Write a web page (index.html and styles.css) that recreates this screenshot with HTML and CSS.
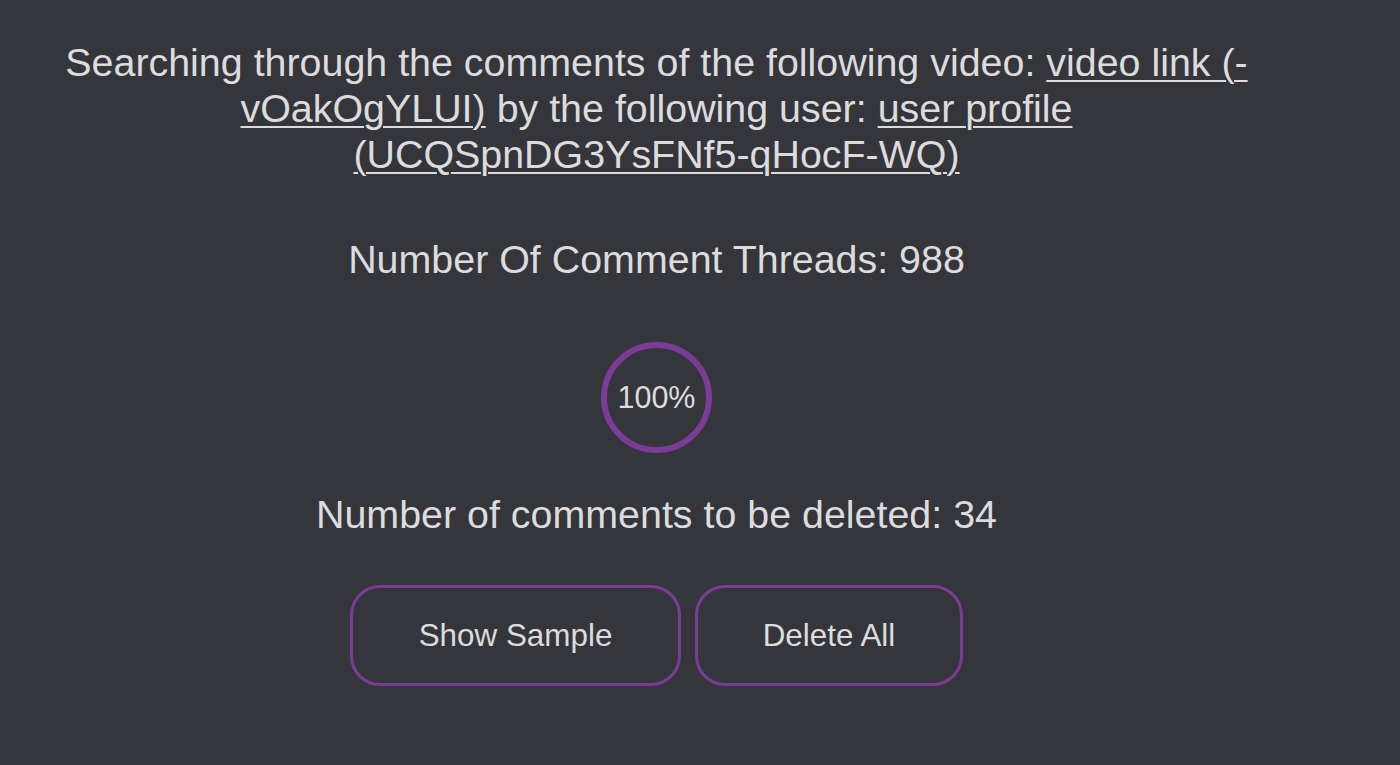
FILE: index.html
```html
<!DOCTYPE html>
<html>
<head>
<meta charset="utf-8">
<link rel="stylesheet" href="styles.css">
</head>
<body>
<main class="page">
  <p class="intro">Searching through the comments of the following video: <a href="#">video link (-vOakOgYLUI)</a> by the following user: <a href="#">user profile (UCQSpnDG3YsFNf5-qHocF-WQ)</a></p>
  <p class="stat stat-threads">Number Of Comment Threads: 988</p>
  <div class="progress"><span class="progress-label">100%</span></div>
  <p class="stat stat-delete">Number of comments to be deleted: 34</p>
  <div class="actions">
    <button class="btn btn-sample">Show Sample</button>
    <button class="btn btn-delete">Delete All</button>
  </div>
</main>
</body>
</html>
```

FILE: styles.css
```css
html, body {
  margin: 0;
  padding: 0;
  background: #35363b;
  height: 100%;
}
body {
  font-family: "Liberation Sans", Arial, sans-serif;
  color: #dcdcde;
}
.page {
  width: 1313px;
  display: flex;
  flex-direction: column;
  align-items: center;
  padding-top: 39px;
}
.intro {
  margin: 0;
  width: 1210px;
  text-align: center;
  font-size: 39.4px;
  line-height: 46px;
}
.intro a {
  color: #dcdcde;
  text-decoration: underline;
  text-decoration-thickness: 2px;
  text-underline-offset: 4px;
}
.stat {
  margin: 0;
  font-size: 39.4px;
  line-height: 46px;
}
.stat-threads {
  margin-top: 59px;
}
.progress {
  margin-top: 60px;
  width: 99px;
  height: 99px;
  border: 6px solid #7b3c97;
  border-radius: 50%;
  display: flex;
  align-items: center;
  justify-content: center;
}
.progress-label {
  font-size: 30.5px;
}
.stat-delete {
  margin-top: 38px;
}
.actions {
  margin-top: 48px;
  display: flex;
  gap: 14px;
}
.btn {
  font-family: "Liberation Sans", Arial, sans-serif;
  font-size: 31.4px;
  color: #dcdcde;
  background: transparent;
  border: 3px solid #7b3c97;
  border-radius: 30px;
  height: 101px;
  padding: 0;
}
.btn-sample {
  width: 331px;
}
.btn-delete {
  width: 268px;
}
```
